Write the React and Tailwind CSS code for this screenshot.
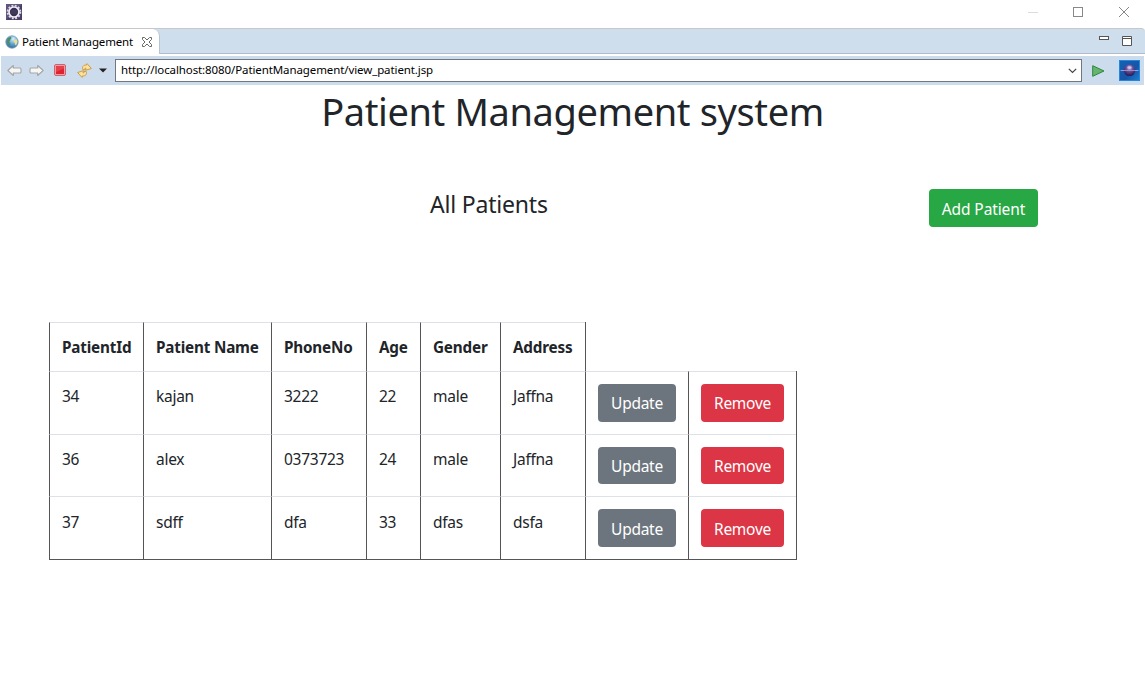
import React from "react";

const patients = [
  { id: "34", name: "kajan", phone: "3222", age: "22", gender: "male", address: "Jaffna", height: "h-[63px]", button: "h-[38px] pb-px", text: "pt-3" },
  { id: "36", name: "alex", phone: "0373723", age: "24", gender: "male", address: "Jaffna", height: "h-[62px]", button: "h-[37px]", text: "pt-3" },
  { id: "37", name: "sdff", phone: "dfa", age: "33", gender: "dfas", address: "dsfa", height: "h-[64px] border-b border-b-[#555]", button: "h-[38px] pt-px", text: "pt-[13px]" },
];

const cell = "shrink-0 border-t border-l border-t-[#dee2e6] border-l-[#555] pl-3 leading-6 whitespace-nowrap";
const widths = ["w-[94px]", "w-[128px]", "w-[95px]", "w-[54px]", "w-[80px]", "w-[85px]"];
const headers = ["PatientId", "Patient Name", "PhoneNo", "Age", "Gender", "Address"];

function EclipseIcon() {
  return (
    <svg width="16" height="16" viewBox="0 0 16 16">
      <rect width="16" height="16" fill="#4a3e69" />
      <path d="M0 0h16L0 16z" fill="#6b5e88" opacity=".7" />
      <circle cx="8" cy="8" r="6.400" fill="none" stroke="#dddae4" strokeWidth="1.800" strokeDasharray="1.900 1.450" />
      <circle cx="8" cy="8" r="5" fill="#37304e" stroke="#f0eff4" strokeWidth="1.700" />
      <path d="M4.200 7h7.600M4.200 9h7.600" stroke="#5a4d7a" strokeWidth=".6" />
    </svg>
  );
}

function GlobeIcon() {
  return (
    <svg width="14" height="14" viewBox="0 0 14 14">
      <defs>
        <radialGradient id="sea" cx=".6" cy=".25" r=".8">
          <stop offset="0" stopColor="#d8effa" />
          <stop offset=".5" stopColor="#65a8d2" />
          <stop offset="1" stopColor="#2c6496" />
        </radialGradient>
      </defs>
      <circle cx="7" cy="7" r="6.200" fill="url(#sea)" stroke="#6f9ab4" strokeWidth=".8" />
      <path d="M2.300 4C3.500 2.500 4.800 2 6 2L6.500 3.200 5.300 4.500 5 6 3.800 6.800 5.200 8 5.200 9.400 4.600 11 3.700 10.300 3.300 8.600 1.800 7z" fill="#4f8a6a" />
      <path d="M9.300 5 11.800 4.600l.8 2.100L11 10.600 10 9.600 9.700 7.800 8.400 6.400z" fill="#f2dc94" />
    </svg>
  );
}

function TabCloseIcon() {
  return (
    <svg width="12" height="12" viewBox="0 0 12 12" fill="#fff" stroke="#686868" strokeWidth="1">
      <path d="M1.500 1.500h2L6 4l2.500-2.500h2v2L8 6l2.500 2.500v2h-2L6 8l-2.500 2.500h-2v-2L4 6 1.500 3.500z" />
    </svg>
  );
}

function Arrow({ flip }) {
  return (
    <svg width="15" height="12" viewBox="0 0 15 12" className={flip ? "-scale-x-100" : ""}>
      <path d="M.8 5.500 6.300.5v2.500h6.700q1 0 1 1v3q0 1-1 1H6.300v2.500z" fill="#f6f6f5" stroke="#a3a5a6" strokeWidth="1.100" strokeLinejoin="round" />
    </svg>
  );
}

function StopIcon() {
  return (
    <svg width="12" height="12" viewBox="0 0 12 12">
      <rect x=".5" y=".5" width="11" height="11" rx="1.500" fill="#eba0a5" stroke="#d4606b" />
      <rect x="2" y="2" width="8" height="8" fill="#dc2430" />
      <path d="M2 2h8v2.500L2 8z" fill="#ea5560" opacity=".6" />
    </svg>
  );
}

function RefreshIcon() {
  return (
    <svg width="15" height="15" viewBox="0 0 15 15" fill="#fbe29a" stroke="#cb953c" strokeWidth=".9" strokeLinejoin="round">
      <path d="M5.800 6.500C4.800 4 6.500 1.600 9.300 2.200L10 .6 14.400 5.500 8.600 7.300 9 5.300C7.800 5 7.600 5.700 8 6.700z" />
      <path d="M9.200 8.500c1 2.500-.7 4.900-3.500 4.300L5 14.400.6 9.500l5.800-1.800L6 9.700c1.200.3 1.400-.4 1-1.400z" />
    </svg>
  );
}

function OrbIcon() {
  return (
    <svg width="21" height="21" viewBox="0 0 21 21">
      <defs>
        <linearGradient id="sky" x1="0" y1="0" x2="1" y2="1">
          <stop offset="0" stopColor="#1462b4" />
          <stop offset=".6" stopColor="#1556a8" />
          <stop offset="1" stopColor="#1d80d4" />
        </linearGradient>
        <radialGradient id="orb" cx=".5" cy=".3" r=".7">
          <stop offset="0" stopColor="#cdb9e8" />
          <stop offset=".4" stopColor="#6a529c" />
          <stop offset="1" stopColor="#21154d" />
        </radialGradient>
      </defs>
      <rect x=".5" y=".5" width="20" height="20" fill="url(#sky)" stroke="#2387dc" />
      <circle cx="10.500" cy="10.300" r="5.800" fill="url(#orb)" />
      <path d="M1.500 10.500h3.500M16 10.500h3.500" stroke="#a09ad8" strokeWidth="1.200" />
      <path d="M5 10.500h11" stroke="#a393cc" strokeWidth=".9" />
      <ellipse cx="10.500" cy="7.500" rx="2.200" ry="1.200" fill="#d9caee" opacity=".8" />
    </svg>
  );
}

export default function App() {
  return (
    <div className="flex h-[679px] w-[1145px] flex-col overflow-hidden bg-white font-['Noto_Sans',sans-serif] text-[#212529]">
      <header className="flex h-7 shrink-0 items-start justify-between pl-1.5 pt-1">
        <EclipseIcon />
        <svg width="117" height="16" viewBox="0 0 117 16" fill="none">
          <path d="M0 8.500h10" stroke="#ddd" />
          <rect x="45.500" y="3.500" width="9" height="9" stroke="#888" />
          <path d="M91 3l10 10M101 3 91 13" stroke="#888" />
        </svg>
      </header>

      <div className="flex h-[26px] shrink-0 justify-between rounded-tr-[4px] border-y border-t-[#c8c8c8] border-b-[#b0bccd] bg-[#cfdeed]">
        <div className="-mb-px flex w-[160px] items-center rounded-tr-[7px] border-r border-[#b8c4d2] bg-white pl-[5px] text-[11.500px] tracking-[-0.15px] text-black">
          <GlobeIcon />
          <span className="ml-[3px] w-[119px] whitespace-nowrap">Patient Management</span>
          <TabCloseIcon />
        </div>
        <svg width="46" height="24" viewBox="0 0 46 24" fill="#fff" stroke="#555">
          <rect x=".5" y="7.500" width="9" height="3" />
          <path d="M23.500 7.500h9v9h-9zM23.500 9.500h9" />
        </svg>
      </div>

      <div className="mx-px mt-0.5 flex h-[29px] shrink-0 items-center bg-[#cddcec] pl-[6px]">
        <Arrow />
        <span className="ml-[7px] flex"><Arrow flip /></span>
        <span className="ml-[10px] flex pb-px"><StopIcon /></span>
        <span className="ml-[11px] flex"><RefreshIcon /></span>
        <svg className="ml-[7px]" width="8" height="5" viewBox="0 0 8 5"><path d="M0 .5h8L4 4.500z" fill="#222" /></svg>
        <div className="ml-2 flex h-[23px] w-[967px] items-center justify-between border border-[#70777d] bg-white pl-[5px] pr-1 text-[11.500px] tracking-[-0.1px] text-black">
          <span className="pb-0.5">http://localhost:8080/PatientManagement/view_patient.jsp</span>
          <svg width="9" height="6" viewBox="0 0 9 6" fill="none" stroke="#444" strokeWidth="1.200"><path d="m.8.800 3.700 3.700L8.200.8" /></svg>
        </div>
        <svg className="ml-[10px]" width="13" height="12" viewBox="0 0 13 12"><path d="M.7.700 12 6 .7 11.300z" fill="#67b56d" stroke="#2b8741" strokeLinejoin="round" /></svg>
        <span className="ml-[14px] flex"><OrbIcon /></span>
      </div>

      <main className="flex flex-col">
        <h1 className="mt-0.5 text-center text-[38px] leading-[48px] tracking-[-0.38px]">Patient Management system</h1>
        <div className="mt-[54px] flex h-[38px] items-start">
          <h2 className="ml-[430px] w-[499px] text-[23px] leading-[30px] tracking-[-0.2px]">All Patients</h2>
          <button className="h-[38px] w-[109px] rounded bg-[#28a745] pt-[3px] text-[15.500px] tracking-[-0.1px] text-white">Add Patient</button>
        </div>
        <div className="ml-[49px] mt-[95px] flex flex-col text-[15.500px] tracking-[-0.27px]">
          <div className="flex h-[49px] w-[537px] border-r border-[#555] text-[15.250px] font-bold tracking-[-0.18px]">
            {headers.map((h, i) => <div key={h} className={`${cell} pt-3 ${widths[i]}`}>{h}</div>)}
          </div>
          {patients.map((p) => (
            <div key={p.id} className={`flex w-[748px] border-r border-r-[#555] ${p.height}`}>
              {[p.id, p.name, p.phone, p.age, p.gender, p.address].map((v, i) => (
                <div key={i} className={`${cell} ${p.text} ${widths[i]}`}>{v}</div>
              ))}
              <div className={`${cell} w-[103px] pt-3`}><button className={`block w-[78px] rounded bg-[#6c757d] text-white ${p.button}`}>Update</button></div>
              <div className={`${cell} w-[108px] pt-3`}><button className={`block w-[83px] rounded bg-[#dc3545] text-white ${p.button}`}>Remove</button></div>
            </div>
          ))}
        </div>
      </main>
    </div>
  );
}
